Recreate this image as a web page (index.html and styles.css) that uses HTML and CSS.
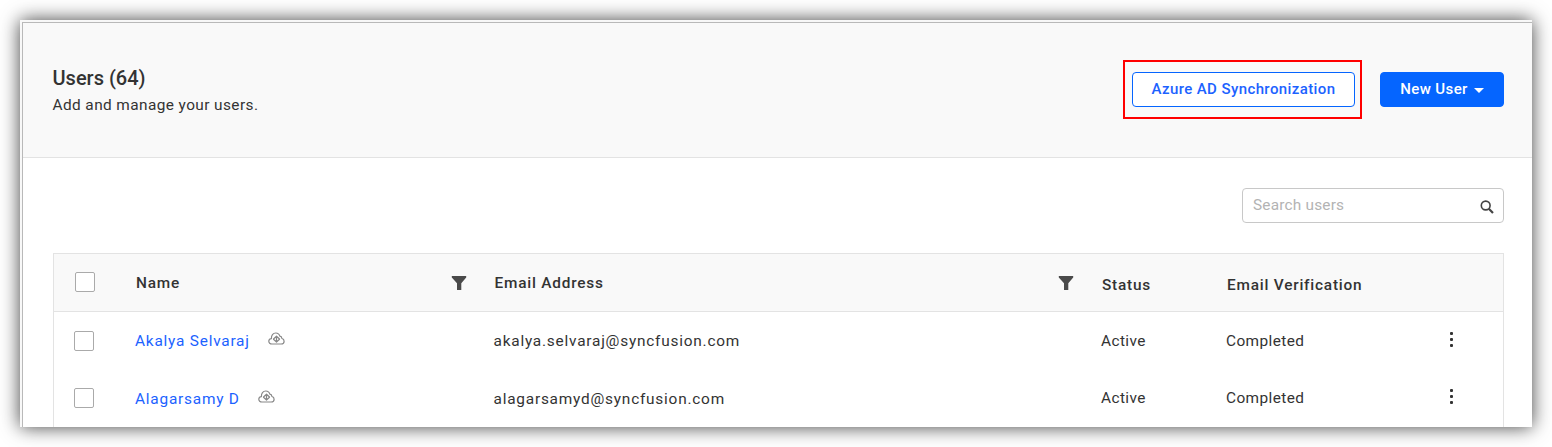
FILE: index.html
```html
<!DOCTYPE html>
<html lang="en">
<head>
<meta charset="utf-8">
<title>Users</title>
<link rel="stylesheet" href="styles.css">
</head>
<body>
<svg class="defs" width="0" height="0" aria-hidden="true">
  <symbol id="funnel" viewBox="0 0 16 16"><path d="M.8 1h14.400v1.500L10.300 8.200V15H6V8.200L.8 2.500z" fill="currentColor"/></symbol>
  <symbol id="cloud" viewBox="0 0 17 13"><g fill="none" stroke="currentColor" stroke-width="1.200" stroke-linejoin="round" stroke-linecap="round"><path d="M4 12C2 12 .8 10.900.8 9.300.8 7.900 1.800 6.700 3.400 6.600 3.200 3.300 5 1 7.800 1c2 0 3.500 1.200 4 3.200 1.400.1 2 .9 2.100 2.300 1.400.3 2.200 1.300 2.200 2.700 0 1.700-1.200 2.800-2.900 2.800z"/><path d="M8.500 10V4M5.500 7 8.500 4.200 11.500 7M5.500 7.200 8.500 10l3-2.800"/></g></symbol>
</svg>
<main class="window">
  <div class="page">
    <header class="header">
      <div class="heading">
        <h1 class="title">Users (64)</h1>
        <p class="subtitle">Add and manage your users.</p>
      </div>
      <div class="actions">
        <div class="highlight"><button class="btn btn-outline">Azure AD Synchronization</button></div>
        <button class="btn btn-primary">New User<span class="caret"></span></button>
      </div>
    </header>
    <div class="toolbar">
      <div class="search"><span>Search users</span>
        <svg class="search-icon" viewBox="0 0 14 14"><circle cx="5.700" cy="5.500" r="4.400" fill="none" stroke="#444" stroke-width="1.600"/><path d="M8.800 8.800 13 13" stroke="#444" stroke-width="2.200"/></svg>
      </div>
    </div>
    <section class="table">
      <div class="row head">
        <span class="checkbox"></span>
        <div class="name-head"><span>Name</span><svg class="funnel"><use href="#funnel"/></svg></div>
        <div class="email-head"><span>Email Address</span><svg class="funnel"><use href="#funnel"/></svg></div>
        <span class="low">Status</span>
        <span class="low">Email Verification</span>
      </div>
      <div class="row">
        <span class="checkbox"></span>
        <div class="name"><a>Akalya Selvaraj</a><svg class="cloud"><use href="#cloud"/></svg></div>
        <span class="email">akalya.selvaraj@syncfusion.com</span>
        <span>Active</span>
        <span>Completed</span>
        <span class="menu"><i></i><i></i><i></i></span>
      </div>
      <div class="row second">
        <span class="checkbox"></span>
        <div class="name"><a>Alagarsamy D</a><svg class="cloud"><use href="#cloud"/></svg></div>
        <span class="email">alagarsamyd@syncfusion.com</span>
        <span>Active</span>
        <span>Completed</span>
        <span class="menu"><i></i><i></i><i></i></span>
      </div>
    </section>
  </div>
</main>
</body>
</html>
```
FILE: styles.css
```css
* { box-sizing: border-box; }
body { margin: 0; padding: 20px; height: 447px; overflow: hidden; background: #fff; color: #333; font: 15.4px/20px Roboto, sans-serif; letter-spacing: .41px; }
.defs { display: block; height: 0; }
.window { height: 407px; padding: 2px 0 0 2px; background: #f8f8f8; box-shadow: 0 0 18px rgba(0,0,0,.75); }
.page { height: 405px; border-top: 1px solid #b9b9b9; border-left: 1px solid #b9b9b9; background: #fff; overflow: hidden; }
.header { display: flex; justify-content: space-between; align-items: flex-start; height: 135px; padding: 37px 28px 0 29.500px; background: #f9f9f9; border-bottom: 1px solid #e3e3e3; }
.heading { padding-top: 6px; }
.title { margin: 0; font-size: 20px; line-height: 24px; font-weight: 500; letter-spacing: 0; }
.subtitle { margin: 5px 0 0; line-height: 20px; }
.actions { display: flex; gap: 18px; align-items: flex-start; }
.highlight { width: 239px; height: 59px; padding: 10px 5px 0 7px; border: 2px solid #f00; }
.btn { display: flex; align-items: center; justify-content: center; height: 35px; padding: 0 0 1px; border: 1px solid #0565ff; border-radius: 4px; font: 500 15px/20px Roboto, sans-serif; letter-spacing: .4px; }
.btn-outline { width: 223px; background: #fff; color: #1c62ff; }
.btn-primary { width: 124px; margin-top: 12px; background: #0565ff; color: #fff; }
.caret { margin: 3px 0 0 6px; border: 5px solid transparent; border-top-color: #fff; border-bottom: 0; }
.toolbar { display: flex; justify-content: flex-end; padding: 30px 28px 30px 0; }
.search { display: flex; justify-content: space-between; align-items: center; width: 262px; height: 35px; padding: 0 9px 1px 10px; border: 1px solid #c8c8c8; border-radius: 4px; color: #b3b3b3; letter-spacing: .2px; }
.search-icon { width: 14px; height: 14px; margin-top: 3px; }
.table { width: 1451px; height: 200px; margin-left: 30px; border: 1px solid #e3e3e3; border-bottom: 0; }
.row { display: grid; grid-template-columns: 61px 358.500px 607.500px 125px 221px 1fr; align-items: center; height: 57px; padding-left: 20px; }
.head { height: 58px; padding-left: 21px; background: #f9f9f9; border-bottom: 1px solid #e3e3e3; font-weight: 500; letter-spacing: .78px; }
.checkbox { width: 20px; height: 20px; border: 1px solid #aaa; border-radius: 2px; background: #fff; }
.head .checkbox { margin-bottom: 1px; }
.name-head, .email-head { display: flex; justify-content: space-between; align-items: center; padding-top: 1px; }
.name-head { padding-right: 27.500px; }
.email-head { padding-right: 28px; }
.funnel { width: 16px; height: 16px; color: #4a4a4a; }
.low { padding-top: 4px; }
.name, .email { letter-spacing: .78px; }
.name { display: flex; align-items: center; gap: 18px; color: #1c62ff; }
.cloud { width: 17px; height: 13px; margin-bottom: 5px; color: #888; }
.second .name, .second .email { padding-top: 2px; }
.menu { display: grid; gap: 3px; margin-bottom: 3px; padding-left: 3px; }
.menu i { width: 3px; height: 3px; border-radius: 1px; background: #333; }
```
